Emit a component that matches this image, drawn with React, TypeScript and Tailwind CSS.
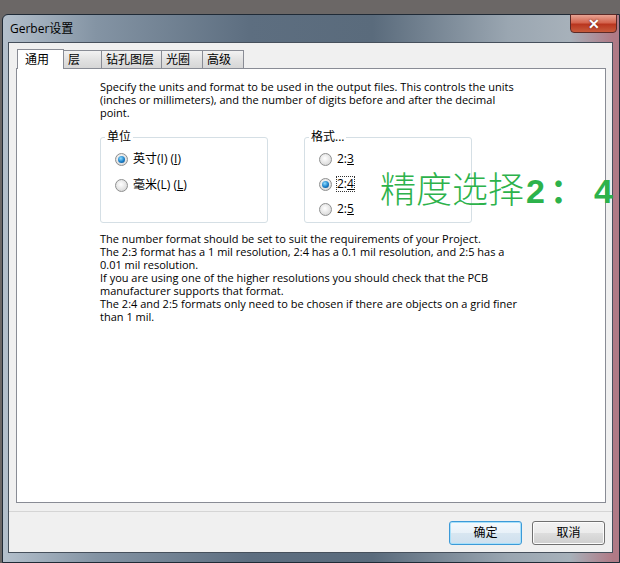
import type { ReactNode } from "react";

const ui = "font-['Open_Sans','Noto_Sans_CJK_SC',sans-serif]";

function Radio({ checked }: { checked?: boolean }) {
  return (
    <span className="flex h-[13px] w-[13px] shrink-0 items-center justify-center rounded-full border border-[#8e8f8f] bg-[radial-gradient(circle_at_45%_40%,#ffffff,#e2e2e2_60%,#c9c9c9)]">
      {checked && (
        <span className="h-[7px] w-[7px] rounded-full bg-[radial-gradient(circle_at_40%_35%,#8fdcff,#1a7fc8_55%,#0b3f78)]" />
      )}
    </span>
  );
}

function Option({ checked, focus, children }: { checked?: boolean; focus?: boolean; children: ReactNode }) {
  return (
    <label className="flex h-[16px] items-center gap-[5px]">
      <Radio checked={checked} />
      <span
        className={
          "text-[12px] leading-[14px] text-black " +
          (focus ? "outline outline-1 outline-dotted outline-[#333] outline-offset-0" : "")
        }
      >
        {children}
      </span>
    </label>
  );
}

function GroupBox({ title, className, children }: { title: string; className: string; children: ReactNode }) {
  return (
    <fieldset className={"rounded-[3px] border border-[#d5dfe5] " + className}>
      <legend className="ml-[-10px] px-[2px] text-[12px] leading-[14px] text-black">{title}</legend>
      {children}
    </fieldset>
  );
}

const tabs = ["通用", "层", "钻孔图层", "光圈", "高级"];

export default function App() {
  return (
    <div className={"h-[563px] w-[620px] overflow-hidden bg-[#6b6766] pl-[2px] pt-[14px] " + ui}>
      {/* window frame */}
      <div className="relative flex h-[549px] w-[618px] flex-col rounded-tl-[6px] border border-[#1f2a36] bg-[linear-gradient(90deg,#b4c0cc_0%,#8494a4_15%,#5d6e80_40%,#5a6b7c_60%,#9aa6b1_82%,#a7b1ba_92%,#b07a86_99%)]">
        {/* title bar */}
        <div className="flex h-[27px] shrink-0 items-center pl-[7px] text-[12px] text-black">
          Gerber设置
        </div>

        {/* close button */}
        <div className="absolute right-[2px] top-[-1px] flex h-[19px] w-[47px] items-center justify-center rounded-b-[4px] border border-[#5b2a27] bg-[linear-gradient(180deg,#e8a393_0%,#d4644e_45%,#b9361f_55%,#c85b3c_100%)]">
          <span className="text-[14px] font-bold leading-none text-white [text-shadow:0_0_2px_#5a1a10]">✕</span>
        </div>

        {/* client area */}
        <div className="ml-[5px] mr-[6px] flex h-[511px] flex-col border border-[#46505c] bg-[#f0f0f0]">
          {/* tab strip */}
          <div className="flex h-[25px] items-end pl-[8px]">
            {tabs.map((t, i) =>
              i === 0 ? (
                <div
                  key={t}
                  className="relative z-10 mb-[-1px] flex h-[20px] w-[47px] items-center border border-b-0 border-[#898c95] bg-white pl-[7px] text-[12px] text-black"
                >
                  {t}
                </div>
              ) : (
                <div
                  key={t}
                  className={
                    "flex h-[18px] items-center border border-b-0 border-l-0 border-[#898c95] bg-[linear-gradient(180deg,#f2f2f2,#e2e2e2_50%,#d6d6d6)] pl-[4px] text-[12px] text-black " +
                    (i === 1 ? "w-[38px]" : i === 2 ? "w-[60px]" : "w-[41px]")
                  }
                >
                  {t}
                </div>
              )
            )}
          </div>

          {/* tab page */}
          <div className="relative mx-[7px] h-[435px] w-[590px] border border-[#898c95] bg-white pl-[83px] pt-[11px] text-[11px] leading-[13px] text-black">
            <p className="w-[423px]">
              Specify the units and format to be used in the output files. This controls the units (inches or
              millimeters), and the number of digits before and after the decimal point.
            </p>

            <div className="mt-[11px] flex items-start">
              <GroupBox title="单位" className="h-[93px] w-[168px] pl-[14px] pt-[7px]">
                <div className="flex flex-col gap-[10px]">
                  <Option checked>
                    英寸(I) (<span className="underline">I</span>)
                  </Option>
                  <Option>
                    毫米(L) (<span className="underline">L</span>)
                  </Option>
                </div>
              </GroupBox>

              <GroupBox title="格式..." className="ml-[36px] h-[93px] w-[168px] pl-[14px] pt-[7px]">
                <div className="flex flex-col gap-[9px]">
                  <Option>
                    2:<span className="underline">3</span>
                  </Option>
                  <Option checked focus>
                    2:<span className="underline">4</span>
                  </Option>
                  <Option>
                    2:<span className="underline">5</span>
                  </Option>
                </div>
              </GroupBox>
            </div>

            <p className="mt-[9px] w-[423px]">
              The number format should be set to suit the requirements of your Project.
              <br />
              The 2:3 format has a 1 mil resolution, 2:4 has a 0.1 mil resolution, and 2:5 has a 0.01 mil
              resolution.
              <br />
              If you are using one of the higher resolutions you should check that the PCB manufacturer supports
              that format.
              <br />
              The 2:4 and 2:5 formats only need to be chosen if there are objects on a grid finer than 1 mil.
            </p>

            {/* annotation overlay */}
            <div className="absolute left-[363px] top-[98px] flex items-baseline whitespace-nowrap text-[#2db24b]">
              <span className="font-['Noto_Sans_CJK_SC',serif] text-[36px] font-light leading-[40px]">精度选择</span>
              <span className="ml-[2px] font-['Liberation_Sans',sans-serif] text-[34px] font-bold leading-[40px]">2</span>
              <span className="ml-[5px] font-['Noto_Sans_CJK_SC',sans-serif] text-[34px] font-bold leading-[40px]">：</span>
              <span className="ml-[10px] font-['Liberation_Sans',sans-serif] text-[34px] font-bold leading-[40px]">4</span>
            </div>
          </div>

          {/* separator + buttons */}
          <div className="mt-[8px] border-t border-[#d5d5d5]" />
          <div className="flex justify-end gap-[10px] pr-[7px] pt-[9px]">
            <button className="h-[24px] w-[73px] rounded-[3px] border border-[#3c9ad8] bg-[linear-gradient(180deg,#f4f9fd,#e8f1f8_50%,#d8e6f1_51%,#cfe0ee)] text-[12px] text-black shadow-[inset_0_0_0_1px_#a8e0fa]">
              确定
            </button>
            <button className="h-[24px] w-[73px] rounded-[3px] border border-[#707070] bg-[linear-gradient(180deg,#f2f2f2,#ebebeb_50%,#dddddd_51%,#cfcfcf)] text-[12px] text-black shadow-[inset_0_0_0_1px_#fcfcfc]">
              取消
            </button>
          </div>
        </div>
      </div>
    </div>
  );
}
